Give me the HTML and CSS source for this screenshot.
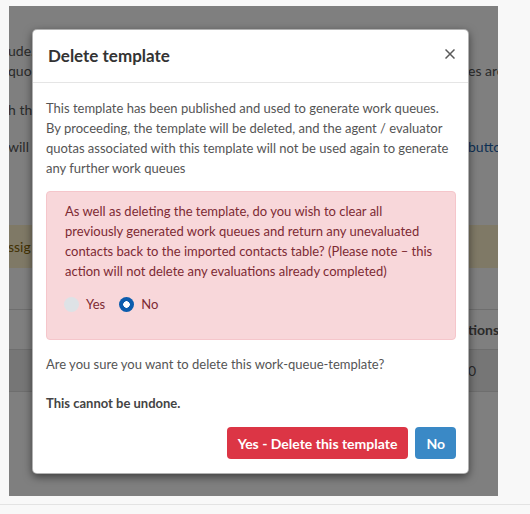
FILE: index.html
```html
<!DOCTYPE html>
<html lang="en">
<head>
<meta charset="utf-8">
<title>Delete template</title>
<link rel="stylesheet" href="styles.css">
</head>
<body>
<div class="frame">
  <div class="page">
    <div class="line l-a"><span class="frag">ude.</span><span class="frag-r"></span></div>
    <div class="line l-b"><span class="frag">quo</span><span class="frag-r">es are</span></div>
    <div class="line l-c"><span class="frag">h th</span><span class="frag-r"></span></div>
    <div class="line l-d"><span class="frag">will</span><span class="frag-r link">butto</span></div>
    <div class="line warn"><span class="frag">ssig</span><span class="frag-r"></span></div>
    <div class="line thead"><span class="frag"></span><span class="frag-r">tions</span></div>
    <div class="line trow"><span class="frag"></span><span class="frag-r">0</span></div>
  </div>
  <div class="backdrop"></div>
  <div class="modal">
    <div class="modal-header">
      <h4 class="modal-title">Delete template</h4>
      <span class="close"><svg width="10" height="10" viewBox="0 0 10 10"><path d="M0.5 0.5L9.5 9.5M9.5 0.5L0.5 9.5" stroke="#5a5a5a" stroke-width="1.5" fill="none"/></svg></span>
    </div>
    <div class="modal-body">
      <p class="intro">This template has been published and used to generate work queues. By proceeding, the template will be deleted, and the agent / evaluator quotas associated with this template will not be used again to generate any further work queues</p>
      <div class="alert">
        <p>As well as deleting the template, do you wish to clear all previously generated work queues and return any unevaluated contacts back to the imported contacts table? (Please note – this action will not delete any evaluations already completed)</p>
        <div class="radios">
          <label class="radio"><span class="dot"></span><span>Yes</span></label>
          <label class="radio"><span class="dot on"></span><span>No</span></label>
        </div>
      </div>
      <p class="confirm">Are you sure you want to delete this work-queue-template?</p>
      <p class="warn-text">This cannot be undone.</p>
    </div>
    <div class="modal-footer">
      <button class="btn btn-danger">Yes - Delete this template</button>
      <button class="btn btn-primary">No</button>
    </div>
  </div>
</div>
<div class="rule"></div>
</body>
</html>
```

FILE: styles.css
```css
* { box-sizing: border-box; }
html, body { margin: 0; padding: 0; }
body {
  background: #f8f8f8;
  font-family: Lato, "Open Sans", sans-serif;
  font-size: 13px;
  color: #333;
  width: 530px;
  height: 514px;
  overflow: hidden;
}
.frame {
  position: relative;
  overflow: hidden;
  margin: 6px 32px 0 9px;
  height: 490px;
  background: #fff;
}
.page {
  display: flex;
  flex-direction: column;
  padding-top: 35px;
  font-size: 14px;
  color: #555;
}
.line {
  display: grid;
  grid-template-columns: 457px 1fr;
  height: 20px;
  line-height: 20px;
  white-space: nowrap;
  overflow: hidden;
}
.frag { overflow: hidden; margin-left: -1px; }
.frag-r { overflow: hidden; padding-left: 2px; }
.link { color: #1a5fa8; }
.l-c { margin-top: 19px; }
.l-d { margin-top: 17px; }
.warn {
  margin-top: 68px;
  height: 43px;
  line-height: 43px;
  background: #fff3cd;
  color: #856404;
}
.thead {
  margin-top: 41px;
  height: 40px;
  line-height: 40px;
  border-top: 1px solid #dcdcdc;
  font-weight: bold;
}
.trow {
  height: 43px;
  line-height: 42px;
  background: #ededed;
  border-top: 1px solid #dcdcdc;
  border-bottom: 1px solid #dcdcdc;
}
.backdrop {
  position: absolute;
  inset: 0;
  background: rgba(0, 0, 0, 0.5);
}
.modal {
  position: absolute;
  left: 23px;
  top: 23px;
  width: 437px;
  background: #fff;
  border: 1px solid rgba(0, 0, 0, 0.3);
  border-radius: 5px;
  box-shadow: 0 3px 9px rgba(0, 0, 0, 0.5);
}
.modal-header {
  display: flex;
  align-items: center;
  justify-content: space-between;
  padding: 13px 13px 13px 15px;
  border-bottom: 1px solid #e5e5e5;
}
.modal-title {
  margin: 0;
  font-size: 17px;
  line-height: 26px;
  font-weight: bold;
  color: #333;
}
.close { display: flex; margin-top: -4px; }
.modal-body {
  padding: 15px 12px 0 13px;
  color: #555;
  line-height: 20px;
}
.modal-body p { margin: 0; }
.intro { margin-bottom: 13px !important; }
.alert {
  background: #f8d7da;
  border: 1px solid #f5c6cb;
  border-radius: 4px;
  padding: 9px 14px 25px 18px;
  color: #7d2a33;
  margin-bottom: 14px;
}
.radios {
  display: flex;
  align-items: center;
  gap: 14px;
  margin-top: 13px;
  height: 20px;
}
.radio {
  display: flex;
  align-items: center;
  gap: 7px;
}
.radio:first-child { margin-left: -1px; }
.dot {
  width: 15px;
  height: 15px;
  border-radius: 50%;
  background: #dee2e6;
}
.dot.on {
  background: radial-gradient(circle, #fff 0 3px, #0b5cad 3.5px);
}
.confirm { margin-bottom: 19px !important; }
.warn-text { font-weight: bold; color: #444; }
.modal-footer {
  display: flex;
  justify-content: flex-end;
  gap: 7px;
  padding: 14px 12px 14px;
}
.btn {
  height: 32px;
  padding: 0 11px;
  border: none;
  border-radius: 4px;
  font-family: Lato, "Open Sans", sans-serif;
  font-size: 14px;
  font-weight: bold;
  color: #fff;
}
.btn-danger { background: #dc3545; }
.btn-primary { background: #3a89c6; }
.rule {
  margin-top: 8px;
  height: 1px;
  background: #e3e3e3;
}
```
